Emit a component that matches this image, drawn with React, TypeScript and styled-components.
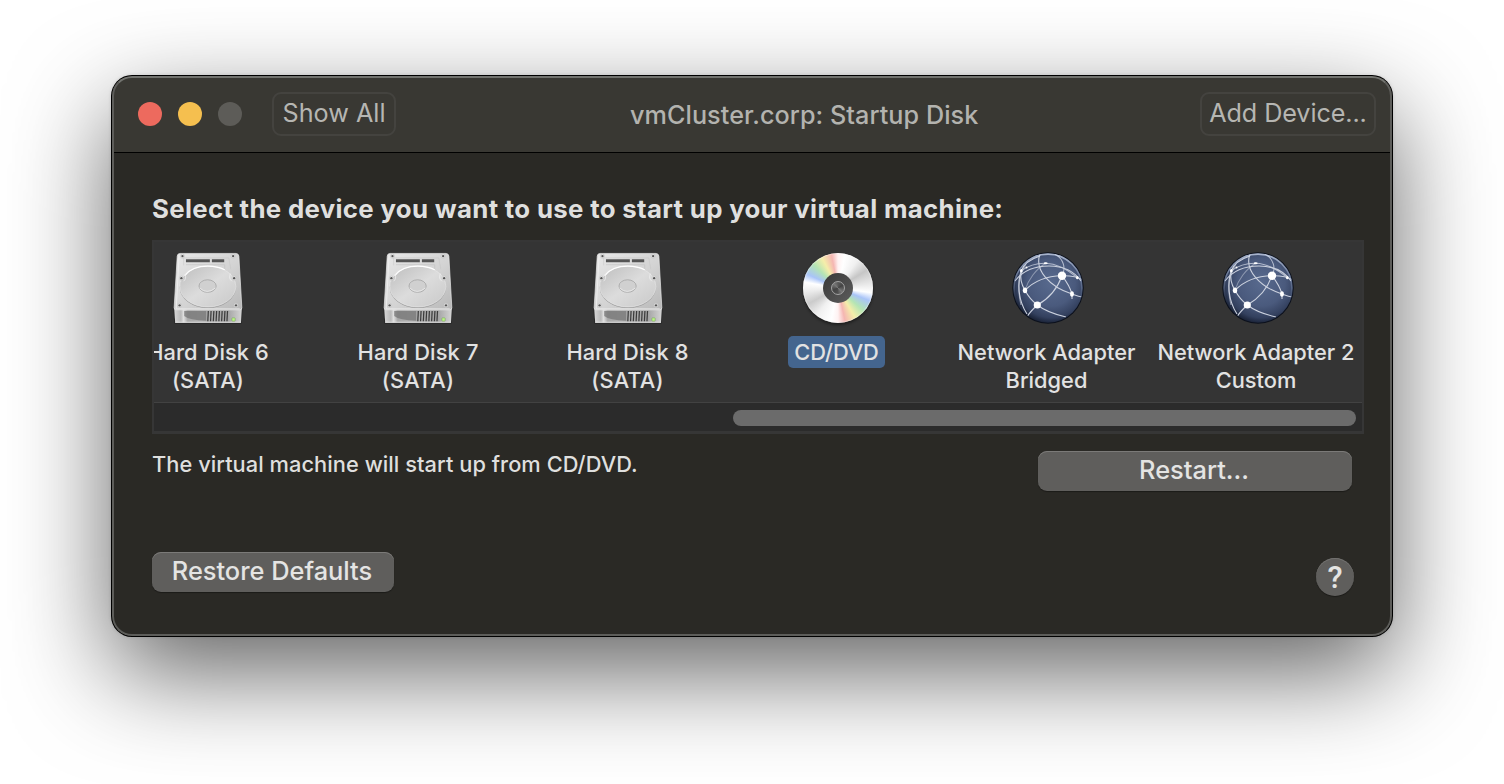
import React from 'react';
import styled, { createGlobalStyle } from 'styled-components';

const GlobalStyle = createGlobalStyle`
  * { box-sizing: border-box; }
  body { margin: 0; background: #fff; font-family: Inter, "Liberation Sans", sans-serif; }
`;

const Desktop = styled.div`
  width: 1504px;
  height: 784px;
  padding: 76px 112px 148px;
  overflow: hidden;
  background: #fff;
`;

const Window = styled.main`
  position: relative;
  width: 1280px;
  height: 560px;
  border-radius: 20px;
  background: #2a2925;
  overflow: hidden;
  box-shadow: 0 0 0 1px #000;
  &::after {
    content: '';
    position: absolute;
    inset: 0;
    border: 2px solid #5d5d5a;
    border-top-color: #72736f;
    border-radius: 20px;
    pointer-events: none;
  }
`;

const Shadow = styled.div`
  width: 1280px;
  height: 560px;
  border-radius: 20px;
  box-shadow: 0 36px 100px rgba(0, 0, 0, 0.62), 0 0 4px rgba(0, 0, 0, 0.2);
`;

const TitleBar = styled.header`
  display: flex;
  align-items: center;
  height: 77px;
  padding: 0 16px 1px 26px;
  background: #393833;
  border-bottom: 1px solid #000;
`;

const Lights = styled.div`
  display: flex;
  gap: 16px;
  margin-right: 30px;
`;

const Light = styled.span<{ $color: string }>`
  width: 24px;
  height: 24px;
  border-radius: 50%;
  background: ${(p) => p.$color};
`;

const ToolbarButton = styled.button<{ $width: number; $spacing: number }>`
  width: ${(p) => p.$width}px;
  height: 44px;
  padding: 0 0 2px;
  border: 2px solid #44433f;
  border-radius: 9px;
  background: transparent;
  color: #b6b6b2;
  font: 430 25.2px/38px Inter, sans-serif;
  letter-spacing: ${(p) => p.$spacing}px;
  white-space: nowrap;
`;

const Title = styled.h1`
  flex: 1;
  margin: 0 0 0 234px;
  color: #b3b3af;
  font-size: 25.2px;
  font-weight: 450;
  line-height: 32px;
  letter-spacing: 0.06px;
  white-space: nowrap;
  padding-top: 2px;
`;

const Content = styled.section`
  padding: 41px 28px 0 40px;
`;

const Heading = styled.h2`
  margin: 0;
  height: 46px;
  color: #dfdfde;
  font-size: 25.8px;
  font-weight: 700;
  line-height: 30px;
  letter-spacing: 0.32px;
  white-space: nowrap;
`;

const DeviceList = styled.div`
  width: 1212px;
  height: 194px;
  border: 2px solid #363636;
  border-bottom-width: 3px;
  background: #343434;
`;

const Viewport = styled.div`
  height: 160px;
  overflow: hidden;
`;

const Strip = styled.div`
  display: flex;
  margin-left: -51px;
`;

const Device = styled.div`
  flex: 0 0 210px;
  min-width: 0;
  display: flex;
  flex-direction: column;
  align-items: center;
  padding-top: 10px;
  svg { display: block; }
`;

const Label = styled.div<{ $selected?: boolean; $shift?: number; $spacing?: number }>`
  margin: 12px ${(p) => (p.$shift ?? 0) * 2}px 0 0;
  padding: 2px 6px;
  border-radius: 5px;
  background: ${(p) => (p.$selected ? '#44658e' : 'transparent')};
  color: #e2e2e2;
  font-size: 21.8px;
  font-weight: 450;
  line-height: 28px;
  letter-spacing: ${(p) => p.$spacing ?? 0}px;
  text-align: center;
  white-space: pre;
`;

const Scroller = styled.div`
  display: flex;
  justify-content: flex-end;
  height: 29px;
  padding: 7px 6px 0 0;
  border-top: 1px solid #424242;
  background: #2b2b2b;
`;

const Thumb = styled.div`
  width: 623px;
  height: 16px;
  border-radius: 8px;
  background: #6b6b6b;
`;

const StatusRow = styled.div`
  display: flex;
  justify-content: space-between;
  align-items: flex-start;
  height: 118px;
  padding: 17px 12px 0 0;
`;

const Status = styled.p`
  margin: -1px 0 0;
  color: #dfdfde;
  font-size: 21.8px;
  font-weight: 450;
  line-height: 28px;
  letter-spacing: 0.05px;
  white-space: nowrap;
`;

const PushButton = styled.button<{ $width: number }>`
  width: ${(p) => p.$width}px;
  height: 40px;
  padding: 0 2px 2px 0;
  border: 0;
  border-radius: 9px;
  background: #5f5e5c;
  box-shadow: inset 0 1px 0 #7b7a78, 0 1px 1px rgba(0, 0, 0, 0.35);
  color: #e4e4e3;
  font: 450 25.4px/38px Inter, sans-serif;
`;

const Footer = styled.footer`
  display: flex;
  justify-content: space-between;
  padding-right: 10px;
`;

const Help = styled.button`
  width: 38px;
  height: 38px;
  margin-top: 6px;
  padding: 0;
  border: 0;
  border-radius: 50%;
  background: #5f5e5c;
  box-shadow: inset 0 1px 0 #72716f, 0 1px 1px rgba(0, 0, 0, 0.35);
  color: #e4e4e3;
  font: 500 31px/39px Roboto, sans-serif;
`;

const DiscSurface = styled.div`
  display: flex;
  align-items: center;
  justify-content: center;
  width: 70px;
  height: 70px;
  margin: 1px;
  border-radius: 50%;
  background: conic-gradient(
    #fff2f2 0deg, #fff 12deg, #f0f0f0 35deg, #c6c6c6 58deg, #e2e2e2 78deg, #fff 98deg,
    #a9c4f8 112deg, #b4e5b4 132deg, #f5eeaa 150deg, #f5b6b2 168deg, #fff2f2 180deg,
    #fff 192deg, #f0f0f0 218deg, #cbcbcb 242deg, #ececec 264deg, #fff 280deg,
    #a9c4f8 294deg, #b4e5b4 314deg, #f5eeaa 332deg, #f5b6b2 349deg, #fff2f2 360deg
  );
  box-shadow: 0 2px 3px rgba(0, 0, 0, 0.45), inset 0 0 1px 0.5px rgba(255, 255, 255, 0.7);
`;

const DiscHub = styled.div`
  display: flex;
  align-items: center;
  justify-content: center;
  width: 30px;
  height: 30px;
  border-radius: 50%;
  background: linear-gradient(135deg, #383838, #5d5d5d);
  &::after {
    content: '';
    width: 12px;
    height: 12px;
    border: 1px solid #a2a2a2;
    border-radius: 50%;
    background: conic-gradient(#5a5a5a, #444 60deg, #777 135deg, #4c4c4c 190deg, #444 250deg, #777 315deg, #5a5a5a);
  }
`;

const screws = [[11.3, 5], [60.7, 5], [10.3, 26.5], [61.7, 26.5], [8.5, 53], [63.5, 53]];
const vents = [36.5, 39.2, 41.9, 44.6, 47.3, 50, 52.7, 55.2];

function DiskIcon({ id }: { id: string }) {
  return (
    <svg width="72" height="72" viewBox="1.1 1 70.2 70.2">
      <defs>
        <linearGradient id={`${id}top`} x1="0" y1="0" x2="1" y2="1">
          <stop offset="0" stopColor="#e8e8e8" />
          <stop offset=".55" stopColor="#d3d3d3" />
          <stop offset="1" stopColor="#b8b8b8" />
        </linearGradient>
        <linearGradient id={`${id}plate`} x1="0" y1="0" x2="1" y2="1">
          <stop offset="0" stopColor="#bdbdbd" />
          <stop offset=".5" stopColor="#dcdcdc" />
          <stop offset="1" stopColor="#c9c9c9" />
        </linearGradient>
        <linearGradient id={`${id}front`} x1="0" y1="0" x2="1" y2="0">
          <stop offset="0" stopColor="#d8d8d8" />
          <stop offset=".1" stopColor="#b9b9b9" />
          <stop offset=".14" stopColor="#e0e0e0" />
          <stop offset=".2" stopColor="#a8a8a8" />
          <stop offset=".4" stopColor="#b0b0b0" />
          <stop offset=".8" stopColor="#a5a5a5" />
          <stop offset="1" stopColor="#d5d5d5" />
        </linearGradient>
      </defs>
      <path d="M2.4 56 3.4 71H69L70 56Z" fill="#1f1f1f" opacity=".6" />
      <path d="M3.2 55.5H69.2L68.3 69.9H4.2Z" fill={`url(#${id}front)`} />
      <path d="M4.2 69.5H68.3" stroke="#e6e6e6" strokeWidth=".9" />
      <path d="M9 2.4H63.5Q66 2.4 66.3 5L69.2 55.5Q69.2 57.4 67 57.4H5.5Q3.2 57.4 3.2 55.5L6.2 5Q6.4 2.4 9 2.4Z" fill={`url(#${id}top)`} stroke="#e6e6e6" strokeWidth=".7" />
      <path d="M8 5 5.2 56.4H67.2" fill="none" stroke="#f3f3f3" strokeWidth=".7" />
      <path d="M12.5 14V6.8H56.5L58.5 18" fill="none" stroke="#c8c8c8" strokeWidth=".6" />
      <path d="M14.7 13.4H52.5V18" fill="none" stroke="#c2c2c2" strokeWidth=".6" />
      <path d="M14.7 8H38V11H14.7ZM40 8H52V11H40Z" fill="#555" />
      <ellipse cx="36" cy="35.5" rx="27.4" ry="20.2" fill="#9c9c9c" />
      <ellipse cx="36" cy="34.6" rx="27.3" ry="20" fill={`url(#${id}plate)`} stroke="#ececec" strokeWidth=".6" />
      <path d="M13.5 24C19 17 28 14.8 36 14.8C42 14.8 48 16 52.5 18.3" fill="none" stroke="#fff" strokeWidth="1.3" />
      <path d="M58 22Q56 27 59.5 29.5M13.8 22.5Q15.5 27 12.4 29.5" fill="none" stroke="#eee" strokeWidth=".8" />
      <ellipse cx="35.8" cy="34.2" rx="8.4" ry="6.1" fill="#d0d0d0" stroke="#a5a5a5" strokeWidth=".8" />
      <path d="M28 36Q35 43 43.6 36" fill="none" stroke="#f5f5f5" strokeWidth=".6" />
      {screws.map(([x, y]) => (
        <g key={`${x}-${y}`}>
          <circle cx={x} cy={y} r="2" fill="#eee" stroke="#b8b8b8" strokeWidth=".5" />
          <circle cx={x} cy={y} r="1.15" fill="#555" />
        </g>
      ))}
      <path d="M13 58.5V63.5Q18 67.8 34.5 68V58.5Z" fill="#757575" opacity=".75" />
      {vents.map((x) => <path key={x} d={`M${x} 58.6 ${x - 0.5} 68.5`} stroke="#3b3b3b" strokeWidth="1.2" />)}
      <rect x="59.5" y="65.2" width="3.2" height="3.2" rx=".6" fill="#b9f584" stroke="#678951" strokeWidth=".4" />
    </svg>
  );
}

function GlobeIcon({ id }: { id: string }) {
  return (
    <svg width="72" height="72" viewBox="0 0 72 72">
      <defs>
        <radialGradient id={`${id}ball`} cx=".55" cy=".42" r=".62">
          <stop offset="0" stopColor="#586a8e" />
          <stop offset=".55" stopColor="#4a5a7d" />
          <stop offset=".82" stopColor="#33405e" />
          <stop offset="1" stopColor="#111829" />
        </radialGradient>
        <linearGradient id={`${id}rim`} x1="0" y1="0" x2="0" y2="1">
          <stop offset="0" stopColor="#d5e0f5" stopOpacity=".7" />
          <stop offset=".5" stopColor="#a6b7d6" stopOpacity=".25" />
          <stop offset=".8" stopColor="#101828" stopOpacity="0" />
        </linearGradient>
        <clipPath id={`${id}clip`}><circle cx="36" cy="36" r="34.4" /></clipPath>
      </defs>
      <circle cx="36" cy="36" r="35.7" fill="#0b101c" />
      <circle cx="36" cy="36" r="34.7" fill={`url(#${id}ball)`} />
      <g clipPath={`url(#${id}clip)`} fill="none" stroke="#cbd1de" strokeWidth="1.1">
        <path d="M50 23.7C45 38 36 47 25.3 53C21 57 17 61 15 65" />
        <path d="M13 38.3C23 28 36 24 50 23.7C58 23.5 66 25 71 28" />
        <path d="M50 23.7C54 29 58 35 60 42V47" />
        <path d="M50 23.7C54 17 52 7 43 2" opacity=".8" />
        <path d="M28 2C22 18 38 35 60 42C65 44 68 45 71 45" />
        <path d="M13 38.3C16 44 20 49 25.3 53C33 59 41 62 54 65" />
        <path d="M13 38.3C16 28 24 17 34 11" opacity=".5" />
        <path d="M3 29C12 17 24 14 37 14C51 14 62 19 69 29" />
        <path d="M9.3 18.7C17 13 25 11 33.7 11.2C45 11.5 56 18 65.3 25.7" opacity=".8" />
        <path d="M13 38.3C9 32 8 25 9.3 18.7C12 11 19 7 28 4" />
        <path d="M9.3 18.7C5 31 6 48 15 62" />
        <path d="M14 12C5 27 6 40 9 53" opacity=".6" />
      </g>
      <g fill="#fff">
        <circle cx="50" cy="23.7" r="4.2" />
        <circle cx="25.3" cy="53" r="3.6" />
        <ellipse cx="13" cy="38.3" rx="2.2" ry="2.9" />
        <ellipse cx="60" cy="42" rx="1.9" ry="2.8" />
        <ellipse cx="9.3" cy="18.7" rx="1.3" ry="1.8" />
        <ellipse cx="33.7" cy="11.2" rx="2" ry="1" />
        <ellipse cx="65.3" cy="25.7" rx="1.3" ry="1.6" />
        <circle cx="14.5" cy="15.5" r="1" />
      </g>
      <circle cx="36" cy="36" r="33.9" fill="none" stroke={`url(#${id}rim)`} strokeWidth="1.6" />
    </svg>
  );
}

function DiscIcon() {
  return <DiscSurface><DiscHub /></DiscSurface>;
}

export default function App() {
  return (
    <>
      <GlobalStyle />
      <Desktop>
        <Shadow>
          <Window>
            <TitleBar>
              <Lights>
                <Light $color="#ed6a5e" />
                <Light $color="#f5bf4f" />
                <Light $color="#5d5c58" />
              </Lights>
              <ToolbarButton $width={124} $spacing={0}>Show All</ToolbarButton>
              <Title>vmCluster.corp: Startup Disk</Title>
              <ToolbarButton $width={176} $spacing={-0.1}>Add Device...</ToolbarButton>
            </TitleBar>
            <Content>
              <Heading>Select the device you want to use to start up your virtual machine:</Heading>
              <DeviceList>
                <Viewport>
                  <Strip>
                    <Device><DiskIcon id="d6" /><Label $spacing={0.1}>{'Hard Disk 6\n(SATA)'}</Label></Device>
                    <Device><DiskIcon id="d7" /><Label $spacing={0.15}>{'Hard Disk 7\n(SATA)'}</Label></Device>
                    <Device><DiskIcon id="d8" /><Label $shift={0.5} $spacing={0.15}>{'Hard Disk 8\n(SATA)'}</Label></Device>
                    <Device><DiscIcon /><Label $selected $shift={1.5} $spacing={-0.1}>CD/DVD</Label></Device>
                    <Device><GlobeIcon id="n1" /><Label $shift={1.5}>{'Network Adapter\nBridged'}</Label></Device>
                    <Device><GlobeIcon id="n2" /><Label $shift={2}>{'Network Adapter 2\nCustom'}</Label></Device>
                  </Strip>
                </Viewport>
                <Scroller><Thumb /></Scroller>
              </DeviceList>
              <StatusRow>
                <Status>The virtual machine will start up from CD/DVD.</Status>
                <PushButton $width={314}>Restart...</PushButton>
              </StatusRow>
              <Footer>
                <PushButton $width={242}>Restore Defaults</PushButton>
                <Help>?</Help>
              </Footer>
            </Content>
          </Window>
        </Shadow>
      </Desktop>
    </>
  );
}
